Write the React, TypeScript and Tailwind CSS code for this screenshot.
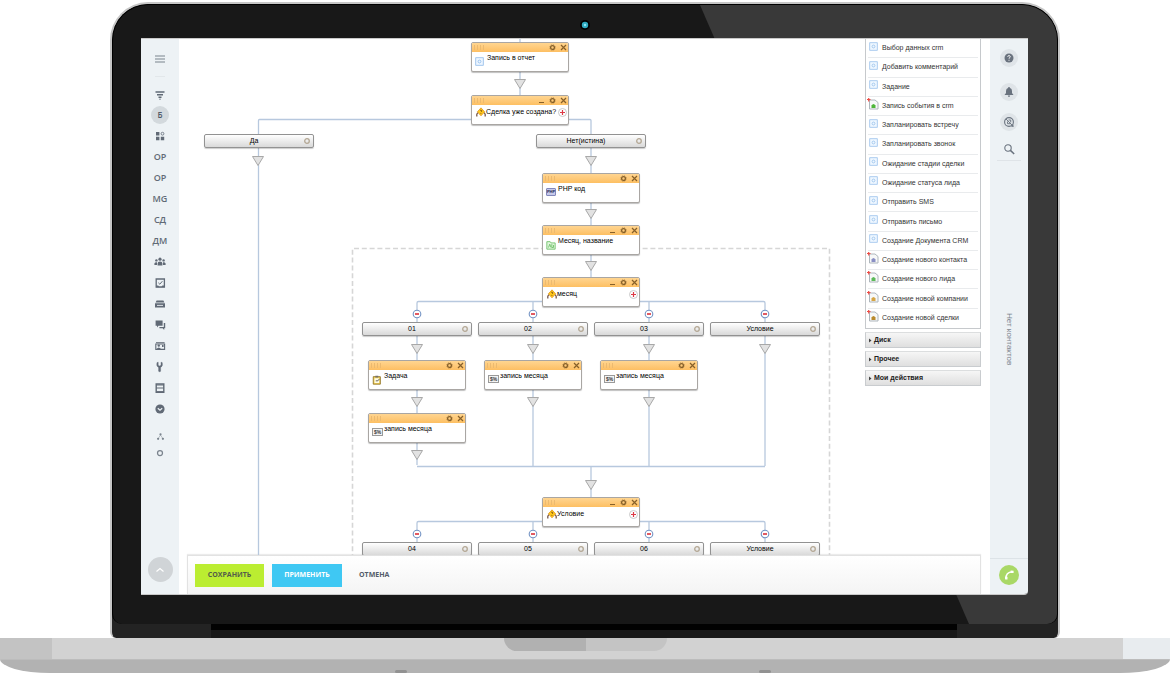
import type { ReactNode } from "react";

type NodeIcon = "action" | "condition" | "php" | "loop" | "task" | "variable";

interface FlowCard {
  x: number;
  y: number;
  title: string;
  icon: NodeIcon;
  foldable?: boolean;
}

interface Point {
  x: number;
  y: number;
}

const cards: FlowCard[] = [
  { x: 292, y: 3, title: "Запись в отчет", icon: "action" },
  { x: 292, y: 56, title: "Сделка уже создана?", icon: "condition", foldable: true },
  { x: 363, y: 134, title: "PHP код", icon: "php" },
  { x: 363, y: 186, title: "Месяц, название", icon: "loop", foldable: true },
  { x: 363, y: 238, title: "месяц", icon: "condition", foldable: true },
  { x: 189, y: 321, title: "Задача", icon: "task" },
  { x: 305, y: 321, title: "запись месяца", icon: "variable" },
  { x: 421, y: 321, title: "запись месяца", icon: "variable" },
  { x: 189, y: 374, title: "запись месяца", icon: "variable" },
  { x: 363, y: 458, title: "Условие", icon: "condition", foldable: true },
];

const branches: (Point & { title: string })[] = [
  { x: 25, y: 95, title: "Да" },
  { x: 357, y: 95, title: "Нет(истина)" },
  { x: 183, y: 283, title: "01" },
  { x: 299, y: 283, title: "02" },
  { x: 415, y: 283, title: "03" },
  { x: 531, y: 283, title: "Условие" },
  { x: 183, y: 503, title: "04" },
  { x: 299, y: 503, title: "05" },
  { x: 415, y: 503, title: "06" },
  { x: 531, y: 503, title: "Условие" },
];

const arrows: Point[] = [
  { x: 341, y: 40 },
  { x: 79, y: 117 },
  { x: 412, y: 117 },
  { x: 412, y: 170 },
  { x: 412, y: 222 },
  { x: 238, y: 305 },
  { x: 354, y: 305 },
  { x: 470, y: 305 },
  { x: 586, y: 305 },
  { x: 238, y: 358 },
  { x: 354, y: 358 },
  { x: 470, y: 358 },
  { x: 238, y: 411 },
  { x: 412, y: 441 },
];

const folds: Point[] = [238, 354, 470, 586].flatMap((x) => [
  { x, y: 275 },
  { x, y: 495 },
]);

const paletteItems: { title: string; doc?: string }[] = [
  { title: "Выбор данных crm" },
  { title: "Добавить комментарий" },
  { title: "Задание" },
  { title: "Запись события в crm", doc: "#4fb63a" },
  { title: "Запланировать встречу" },
  { title: "Запланировать звонок" },
  { title: "Ожидание стадии сделки" },
  { title: "Ожидание статуса лида" },
  { title: "Отправить SMS" },
  { title: "Отправить письмо" },
  { title: "Создание Документа CRM" },
  { title: "Создание нового контакта", doc: "#8a8fc4" },
  { title: "Создание нового лида", doc: "#5cba5a" },
  { title: "Создание новой компании", doc: "#d6a545" },
  { title: "Создание новой сделки", doc: "#b98a2c" },
];

const paletteGroups = ["Диск", "Прочее", "Мои действия"];

function Svg({ size = 12, children }: { size?: number; children: ReactNode }) {
  return (
    <svg width={size} height={size} viewBox="0 0 12 12" fill="none" aria-hidden="true" className="shrink-0">
      {children}
    </svg>
  );
}

const sidebarItems: { label: string; content: ReactNode; active?: boolean }[] = [
  {
    label: "Фильтр",
    content: (
      <Svg>
        <path d="M1.5 4h9M3 6.8h6M4.5 9.2h3" stroke="currentColor" strokeWidth="1.6" />
        <path d="M5.3 11.2h1.4" stroke="currentColor" />
      </Svg>
    ),
  },
  { label: "Б", content: "Б", active: true },
  {
    label: "Приложения",
    content: (
      <Svg>
        <path d="M2 2h3.4v3.4H2zM2 6.8h3.4v3.4H2zM6.8 6.8h3.4v3.4H6.8z" fill="currentColor" />
        <circle cx="8.5" cy="3.7" r="1.4" stroke="currentColor" strokeWidth="0.8" />
      </Svg>
    ),
  },
  { label: "ОР 1", content: "ОР" },
  { label: "ОР 2", content: "ОР" },
  { label: "MG", content: "MG" },
  { label: "СД", content: "СД" },
  { label: "ДМ", content: "ДМ" },
  {
    label: "Группы",
    content: (
      <Svg>
        <circle cx="6" cy="3.2" r="1.6" fill="currentColor" />
        <circle cx="2.4" cy="4.4" r="1.2" fill="currentColor" />
        <circle cx="9.6" cy="4.4" r="1.2" fill="currentColor" />
        <path
          d="M3.6 9.6V7.4Q3.6 5.4 6 5.4T8.4 7.4V9.6zM.4 9V7.4Q.8 6 3 6.2V9zM11.6 9V7.4Q11.2 6 9 6.2V9z"
          fill="currentColor"
        />
      </Svg>
    ),
  },
  {
    label: "Задачи",
    content: (
      <Svg>
        <path d="M2.2 2h8.2v8.2H2.2z" stroke="currentColor" strokeWidth="1.3" />
        <path d="M4.4 5.8l1.4 1.4 2.6-3" stroke="currentColor" />
        <path d="M2.2 8.4h2l.8 1.2h2.6l.8-1.2h2v1.8H2.2z" fill="currentColor" />
      </Svg>
    ),
  },
  {
    label: "Диск",
    content: (
      <Svg>
        <path d="M2.6 2.4h6.8l1 2H1.6zM1 5.2h10v4.4H1z" fill="currentColor" />
        <path d="M3 7.4h6" stroke="#edf2f5" strokeWidth="0.9" />
      </Svg>
    ),
  },
  {
    label: "Чат",
    content: (
      <Svg>
        <path d="M1.6 1.6h7v5.2H4.4L3 8.4V6.8H1.6z" fill="currentColor" />
        <path d="M9.8 4h1.4v5.2h-1V11L8.6 9.2H5.4V8h4.4z" fill="currentColor" />
      </Svg>
    ),
  },
  {
    label: "Контакты",
    content: (
      <Svg>
        <path d="M2 2.2h8.6v1H2z" fill="currentColor" />
        <path d="M1.8 4h8.8v5.4H1.8z" stroke="currentColor" strokeWidth="1.1" />
        <circle cx="4.8" cy="5.6" r="1.2" fill="currentColor" />
        <path d="M2.6 9Q4.8 6 7 9zM8 5h1.6v2H8z" fill="currentColor" />
      </Svg>
    ),
  },
  {
    label: "Инструменты",
    content: (
      <Svg>
        <path
          d="M3 1.6q-1 3.6 1.6 5v3.6q1 1 2 0V6.6q2.6-1.4 1.6-5L7 1.2v3l-1.4.8-1.4-.8v-3z"
          fill="currentColor"
          stroke="currentColor"
          strokeWidth="0.4"
        />
      </Svg>
    ),
  },
  {
    label: "База знаний",
    content: (
      <Svg>
        <path d="M2.2 2h7.6v8.4H2.2z" stroke="currentColor" strokeWidth="1.4" />
        <path d="M2.2 3h7.6M2.2 6h7.6M2.2 9.6h7.6" stroke="currentColor" />
      </Svg>
    ),
  },
  {
    label: "Ещё",
    content: (
      <Svg>
        <circle cx="6" cy="6" r="4.6" fill="currentColor" />
        <path d="M3.8 5.2L6 7.2l2.2-2" stroke="#edf2f5" strokeWidth="1.2" />
      </Svg>
    ),
  },
];

function NodeGlyph({ icon }: { icon: NodeIcon }) {
  switch (icon) {
    case "action":
      return (
        <Svg size={9}>
          <rect x="1" y="1" width="10" height="10" stroke="#84b5e8" fill="#eef6ff" />
          <circle cx="6" cy="6" r="1.9" stroke="#84b5e8" />
        </Svg>
      );
    case "condition":
      return (
        <Svg size={10}>
          <path d="M1 11.5V9q0-2 2-2.5M11 11.5V9q0-2-2-2.5" stroke="#5b3524" strokeWidth="1.3" />
          <path d="M6 1l4.4 4.8L6 10.6 1.6 5.8z" fill="#ffc91c" stroke="#dc8a12" strokeWidth="0.8" />
          <path d="M4.9 4.3q1-1.3 2 0 .3 1-1 1.7M5.9 7.3v1" stroke="#6b3a10" strokeWidth="0.9" />
        </Svg>
      );
    case "php":
      return (
        <span className="flex h-2 w-[10px] items-center justify-center rounded-[1px] border border-[#8288bb] bg-[#c6c9ea] text-[4px] leading-none font-bold text-[#22254f]">
          PHP
        </span>
      );
    case "loop":
      return (
        <Svg size={10}>
          <path d="M1 2h4l1 1.5h5V11H1z" fill="#e0f6dc" stroke="#67bd62" />
          <path d="M3 9l1.5-4L6 9M7 5v4h2V6" stroke="#67bd62" />
        </Svg>
      );
    case "task":
      return (
        <Svg size={10}>
          <path d="M1.5 2H10v9H1.5z" fill="#f3d35c" stroke="#8a6b1c" />
          <path d="M3 4h5.6v5.5H3z" fill="#fffbe4" />
          <path d="M4 1h3.5v2H4z" fill="#77726a" />
          <path d="M4.5 7H7l2-2.4" stroke="#4a4a4a" />
        </Svg>
      );
    case "variable":
      return (
        <span className="flex h-2 w-[11px] items-center justify-center border border-[#9a9a9a] bg-[#f4f4f4] text-[5px] leading-none font-bold text-[#333]">
          $%
        </span>
      );
  }
}

function Card({ card }: { card: FlowCard }) {
  const isCondition = card.icon === "condition";
  return (
    <article
      className="absolute h-[30px] w-[98px] overflow-hidden rounded-[2px] border border-[#a9a6a3] bg-white shadow-[0_1px_1px_rgba(0,0,0,0.25)]"
      style={{ left: card.x, top: card.y }}
    >
      <header className="flex h-[9px] items-center gap-1 bg-linear-to-b from-[#ffd590] to-[#fdbf62] pr-px pl-[2px] text-[#86602a]">
        <svg width="10" height="5" aria-hidden="true" className="mr-auto">
          <path d="M.5 0v5M3.5 0v5M6.5 0v5M9.5 0v5" stroke="#ecba70" />
        </svg>
        {card.foldable && (
          <button type="button" aria-label="Свернуть">
            <svg width="7" height="7" viewBox="0 0 7 7" className="block">
              <path d="M1 5.5h5" stroke="currentColor" />
            </svg>
          </button>
        )}
        <button type="button" aria-label="Настройки">
          <svg width="7" height="7" viewBox="0 0 7 7" fill="none" className="block">
            <circle cx="3.5" cy="3.5" r="1.9" stroke="currentColor" strokeWidth="1.3" />
            <circle cx="3.5" cy="3.5" r="2.8" stroke="currentColor" strokeWidth="0.6" strokeDasharray="1.1 1.1" />
          </svg>
        </button>
        <button type="button" aria-label="Удалить">
          <svg width="7" height="7" viewBox="0 0 7 7" className="block">
            <path d="M1 1l5 5M6 1L1 6" stroke="currentColor" strokeWidth="1.2" />
          </svg>
        </button>
      </header>
      <div className={isCondition ? "flex items-center pt-px pl-1" : "flex pl-[3px]"}>
        <span className={isCondition ? "" : "w-3 pt-[5px]"}>
          <NodeGlyph icon={card.icon} />
        </span>
        <span className="text-[7px] leading-[12px] whitespace-nowrap text-black">{card.title}</span>
        {isCondition && (
          <button type="button" aria-label="Добавить ветку" className="ml-auto pr-px">
            <svg width="9" height="9" viewBox="0 0 9 9" className="block">
              <circle cx="4.5" cy="4.5" r="4" fill="#fff" stroke="#c9c9c9" />
              <path d="M2 4.5h5M4.5 2v5" stroke="#dc3a45" strokeWidth="1.2" />
            </svg>
          </button>
        )}
      </div>
    </article>
  );
}

function Branch({ x, y, title }: Point & { title: string }) {
  return (
    <div
      className="absolute flex h-[14px] w-[110px] items-center rounded-[2px] border border-[#929292] bg-linear-to-b from-white to-[#d9d9d9] pr-[2px] shadow-[0_1px_1px_rgba(0,0,0,0.2)]"
      style={{ left: x, top: y }}
    >
      <span className="flex-1 text-center text-[7px] leading-[12px] text-black">{title}</span>
      <button type="button" aria-label={`Настройки: ${title}`}>
        <svg width="8" height="8" viewBox="0 0 8 8" fill="none" className="block">
          <circle cx="4" cy="4" r="2.3" stroke="#b3a794" strokeWidth="1.3" />
        </svg>
      </button>
    </div>
  );
}

function Connectors() {
  return (
    <svg className="absolute top-0 left-0 h-full w-full" fill="none" aria-hidden="true">
      <path d="M173.5 520V209.5H650.5V520" stroke="#d6d6d6" strokeWidth="1.6" strokeDasharray="5 2.8" />
      <g stroke="#b7c8de" strokeWidth="1.3">
        <path d="M341 0v60M79.5 520V81.500q0-1 1-1H411q1 0 1 1V245" />
        <path d="M238 426V264q0-1.5 1.5-1.5h345q1.5 0 1.5 1.5v163M354 262v166M470 262v166M238 427.5h348M412 428v34" />
        <path d="M238 510V484q0-1.5 1.5-1.5h345q1.5 0 1.5 1.5v26M354 482v26M470 482v26" />
      </g>
      {arrows.map(({ x, y }) => (
        <path key={`${x}-${y}`} d={`M${x - 5.5} ${y + 0.5}h11l-5.5 9z`} fill="#e2e2e2" stroke="#a8a8a8" />
      ))}
      {folds.map(({ x, y }) => (
        <g key={`${x}-${y}`}>
          <circle cx={x} cy={y} r="3.8" fill="#fff" stroke="#7393c4" strokeWidth="1.1" />
          <path d={`M${x - 2} ${y}h4`} stroke="#d8232c" strokeWidth="1.5" />
        </g>
      ))}
    </svg>
  );
}

function Palette() {
  return (
    <aside className="mr-[9px] flex w-[116px] shrink-0 flex-col gap-[3px]">
      <ul className="-mt-px grid h-[291px] auto-rows-fr border border-[#c6c9cc] px-[2px]">
        {paletteItems.map(({ title, doc }) => (
          <li key={title} className="flex items-center gap-1 border-b border-[#e9ebed] last:border-b-0">
            <span className="flex w-[10px] justify-center pb-1">
              {doc ? (
                <Svg size={12}>
                  <path d="M2.5 2H8l3 2.5V11H2.5z" fill="#f7f8f8" stroke="#aeb6bc" />
                  <path d="M4.5 7.5q2-3 4 0V10h-4z" fill={doc} />
                  <path d="M0 1.5h3.5M1.7 0v3.5" stroke="#ee4b44" strokeWidth="1.2" />
                </Svg>
              ) : (
                <Svg size={9}>
                  <rect x="1" y="1" width="10" height="10" fill="#eff7ff" stroke="#91bdea" />
                  <circle cx="6" cy="6" r="1.9" stroke="#91bdea" />
                </Svg>
              )}
            </span>
            <span className="text-[7px] leading-[10px] whitespace-nowrap text-[#333]">{title}</span>
          </li>
        ))}
      </ul>
      {paletteGroups.map((group) => (
        <button
          key={group}
          type="button"
          className="flex h-4 items-center gap-[2px] border border-[#c9cccf] border-t-[#dcdedf] bg-linear-to-b from-[#f6f6f6] to-[#dfdfdf] pl-[3px] text-[7px] leading-[10px] font-bold text-[#222]"
        >
          <svg width="3" height="5" aria-hidden="true">
            <path d="M0 .5l2.5 2L0 4.500z" fill="#444" />
          </svg>
          {group}
        </button>
      ))}
    </aside>
  );
}

function Sidebar() {
  return (
    <nav className="flex w-[38px] shrink-0 flex-col items-center bg-[#edf2f5] pt-[15px] pb-3 font-['Open_Sans'] text-[9px] leading-[12px] font-semibold text-[#525c69]">
      <button type="button" aria-label="Меню" className="flex h-[10px] items-center">
        <svg width="10" height="8" aria-hidden="true">
          <path d="M0 1h10M0 4h10M0 7h10" stroke="#7b848e" strokeWidth="1.2" />
        </svg>
      </button>
      <span className="mt-3 mb-[6px] h-px w-[10px] bg-[#e2e7ea]" />
      <ul className="flex flex-col">
        {sidebarItems.map(({ label, content, active }) => (
          <li key={label} className="flex h-[21px] items-center justify-center">
            <button
              type="button"
              aria-label={label}
              className={
                active
                  ? "flex size-[18px] items-center justify-center rounded-full bg-[#d3d9dd] text-[8px]"
                  : "flex items-center justify-center opacity-90"
              }
            >
              {content}
            </button>
          </li>
        ))}
      </ul>
      <button type="button" aria-label="Структура" className="mt-[5px] h-6 text-[#7b848e]">
        <Svg size={9}>
          <circle cx="6" cy="3" r="1.5" fill="currentColor" />
          <circle cx="2.8" cy="9" r="1.5" fill="currentColor" />
          <circle cx="9.2" cy="9" r="1.5" fill="currentColor" />
          <path d="M6 4L3 8.5M6 4l3 4.5" stroke="currentColor" strokeWidth="0.6" />
        </Svg>
      </button>
      <button type="button" aria-label="Настройки меню" className="text-[#7b848e]">
        <Svg size={10}>
          <circle cx="6" cy="6" r="3" stroke="currentColor" strokeWidth="1.5" />
        </Svg>
      </button>
      <button
        type="button"
        aria-label="Наверх"
        className="mt-auto flex size-[25px] items-center justify-center rounded-full bg-[#d0d4d7] text-white"
      >
        <Svg>
          <path d="M2.5 7.5L6 4.5l3.5 3" stroke="currentColor" strokeWidth="1.2" />
        </Svg>
      </button>
    </nav>
  );
}

function RightRail() {
  const round = "flex size-[18px] items-center justify-center rounded-full bg-[#dfe4e8] text-[#69727e]";
  return (
    <aside className="flex w-[38px] shrink-0 flex-col items-center bg-[#edf2f5] pt-[10px]">
      <button type="button" aria-label="Помощь" className={round}>
        <Svg>
          <circle cx="6" cy="6" r="4.5" fill="currentColor" />
          <path d="M4.7 4.8q.1-1.2 1.3-1.2t1.3 1.1q0 .7-1.3 1.6v.5M6 7.8v1" stroke="#fff" strokeWidth="0.9" />
        </Svg>
      </button>
      <button type="button" aria-label="Уведомления" className={`${round} mt-4`}>
        <Svg>
          <path
            d="M6 1q1 0 1 1 2 .5 2 3v2l1.5 2h-9L3 7V5q0-2.5 2-3 0-1 1-1zM4.8 9.6h2.4q-.2 1.4-1.2 1.4T4.8 9.6z"
            fill="currentColor"
          />
        </Svg>
      </button>
      <button type="button" aria-label="Сообщения" className={`${round} mt-3`}>
        <Svg>
          <circle cx="6" cy="6" r="4.4" stroke="currentColor" strokeWidth="1.1" />
          <path d="M3 3l6.5 6.5M4.5 5.5v2.2h3M5.500 4h2.2v2.4" stroke="currentColor" strokeWidth="0.9" />
          <path d="M8 10.5l2.6.4-.3-2.6z" fill="currentColor" />
        </Svg>
      </button>
      <button type="button" aria-label="Поиск" className="mt-3 text-[#69727e]">
        <Svg>
          <circle cx="5" cy="5" r="3.2" stroke="currentColor" strokeWidth="1.1" />
          <path d="M7.4 7.4l3.8 3.6" stroke="currentColor" strokeWidth="1.5" />
        </Svg>
      </button>
      <span className="mt-[5px] h-px w-6 bg-[#dfe4e8]" />
      <div className="flex flex-1 items-center pb-10">
        <p className="text-[8px] leading-[10px] text-[#7c858e] [writing-mode:vertical-rl]">Нет контактов</p>
      </div>
      <div className="flex w-full justify-center border-t border-[#dde3e7] pt-[6px] pb-[9px]">
        <button
          type="button"
          aria-label="Позвонить"
          className="flex size-5 items-center justify-center rounded-full bg-[#a9d866]"
        >
          <Svg>
            <path d="M3 10Q2.5 3.2 9.5 2.8" stroke="#fff" strokeWidth="1.5" />
            <path d="M1.9 7.8h2.6v2.8H2.2zM7.6 1.5l3 .2v2.4h-3z" fill="#fff" />
          </Svg>
        </button>
      </div>
    </aside>
  );
}

function Workspace() {
  return (
    <main className="flex min-w-0 flex-1 flex-col bg-white">
      <div className="flex h-[516px] overflow-hidden">
        <section className="relative min-w-0 flex-1" aria-label="Схема бизнес-процесса">
          <Connectors />
          {branches.map((branch) => (
            <Branch key={`${branch.x}-${branch.y}`} {...branch} />
          ))}
          {cards.map((card) => (
            <Card key={`${card.x}-${card.y}`} card={card} />
          ))}
        </section>
        <Palette />
      </div>
      <footer className="mr-[9px] ml-2 flex h-[39px] items-center gap-2 border border-b-0 border-[#e2e2e2] bg-linear-to-b from-white to-[#f4f4f4] pl-[7px] font-['Open_Sans'] text-[7px] leading-[10px] font-bold shadow-[0_-1px_1px_rgba(0,0,0,0.08)]">
        <button type="button" className="h-[23px] w-[69px] bg-[#bbed31] text-[#535c4a]">
          СОХРАНИТЬ
        </button>
        <button type="button" className="h-[23px] w-[70px] bg-[#3fc8f3] text-white">
          ПРИМЕНИТЬ
        </button>
        <button type="button" className="px-[9px] text-[#535c69]">
          ОТМЕНА
        </button>
      </footer>
    </main>
  );
}

function LaptopBase() {
  return (
    <div>
      <div className="flex h-[21px] bg-[#d2d2d2]">
        <span className="w-[52px] bg-[#c3c3c3]" />
        <span className="flex flex-1 justify-center">
          <span className="mr-1 flex h-[13px] w-[163px] overflow-hidden rounded-b-[13px]">
            <span className="flex-1 bg-[#b1b1b1]" />
            <span className="flex-1 bg-[#c4c4c4]" />
          </span>
        </span>
        <span className="w-[47px] bg-[#e8ecef]" />
      </div>
      <div className="flex h-[14px] items-end justify-center gap-[352px] rounded-b-[50px_14px] border-t border-[#bcbcbc] bg-[#b2b2b2] pr-1">
        <span className="h-[3px] w-3 rounded-full bg-[#929292]" />
        <span className="h-[3px] w-3 rounded-full bg-[#929292]" />
      </div>
    </div>
  );
}

export default function App() {
  return (
    <div className="overflow-hidden bg-white pt-[2px] font-['Liberation_Sans',sans-serif]">
      <div className="mx-[110px] overflow-hidden rounded-t-[38px] rounded-b-[6px] border-2 border-b-0 border-[#c6c6c6] bg-[#232323]">
        <div className="relative rounded-t-[36px] rounded-b-[10px] border-x border-t border-black bg-[#181818] pt-[33px] pr-[29px] pb-[29px] pl-[28px]">
          {/* glass reflection */}
          <svg
            className="absolute inset-0 h-full w-full rounded-t-[35px] rounded-b-[10px]"
            viewBox="0 0 944 619"
            preserveAspectRatio="none"
            aria-hidden="true"
          >
            <path d="M587 0H944V619H856z" fill="#393939" />
          </svg>
          {/* camera */}
          <svg className="absolute top-[15px] left-1/2 -ml-[5px]" width="10" height="10" viewBox="0 0 10 10" aria-hidden="true">
            <circle cx="5" cy="5" r="5" fill="#000" />
            <circle cx="5" cy="5" r="3.2" fill="#2fa9bf" />
            <circle cx="5" cy="5" r="1.2" fill="#8fe4f2" />
          </svg>
          <div className="relative flex overflow-hidden rounded-br-[4px] border-y border-[#c9c9c9]">
            <Sidebar />
            <Workspace />
            <RightRail />
          </div>
        </div>
        <div className="flex h-[14px] pr-[101px] pl-[99px]">
          <span className="flex-1 border-t-[6px] border-[#020202] bg-[#181818]" />
        </div>
      </div>
      <LaptopBase />
    </div>
  );
}
